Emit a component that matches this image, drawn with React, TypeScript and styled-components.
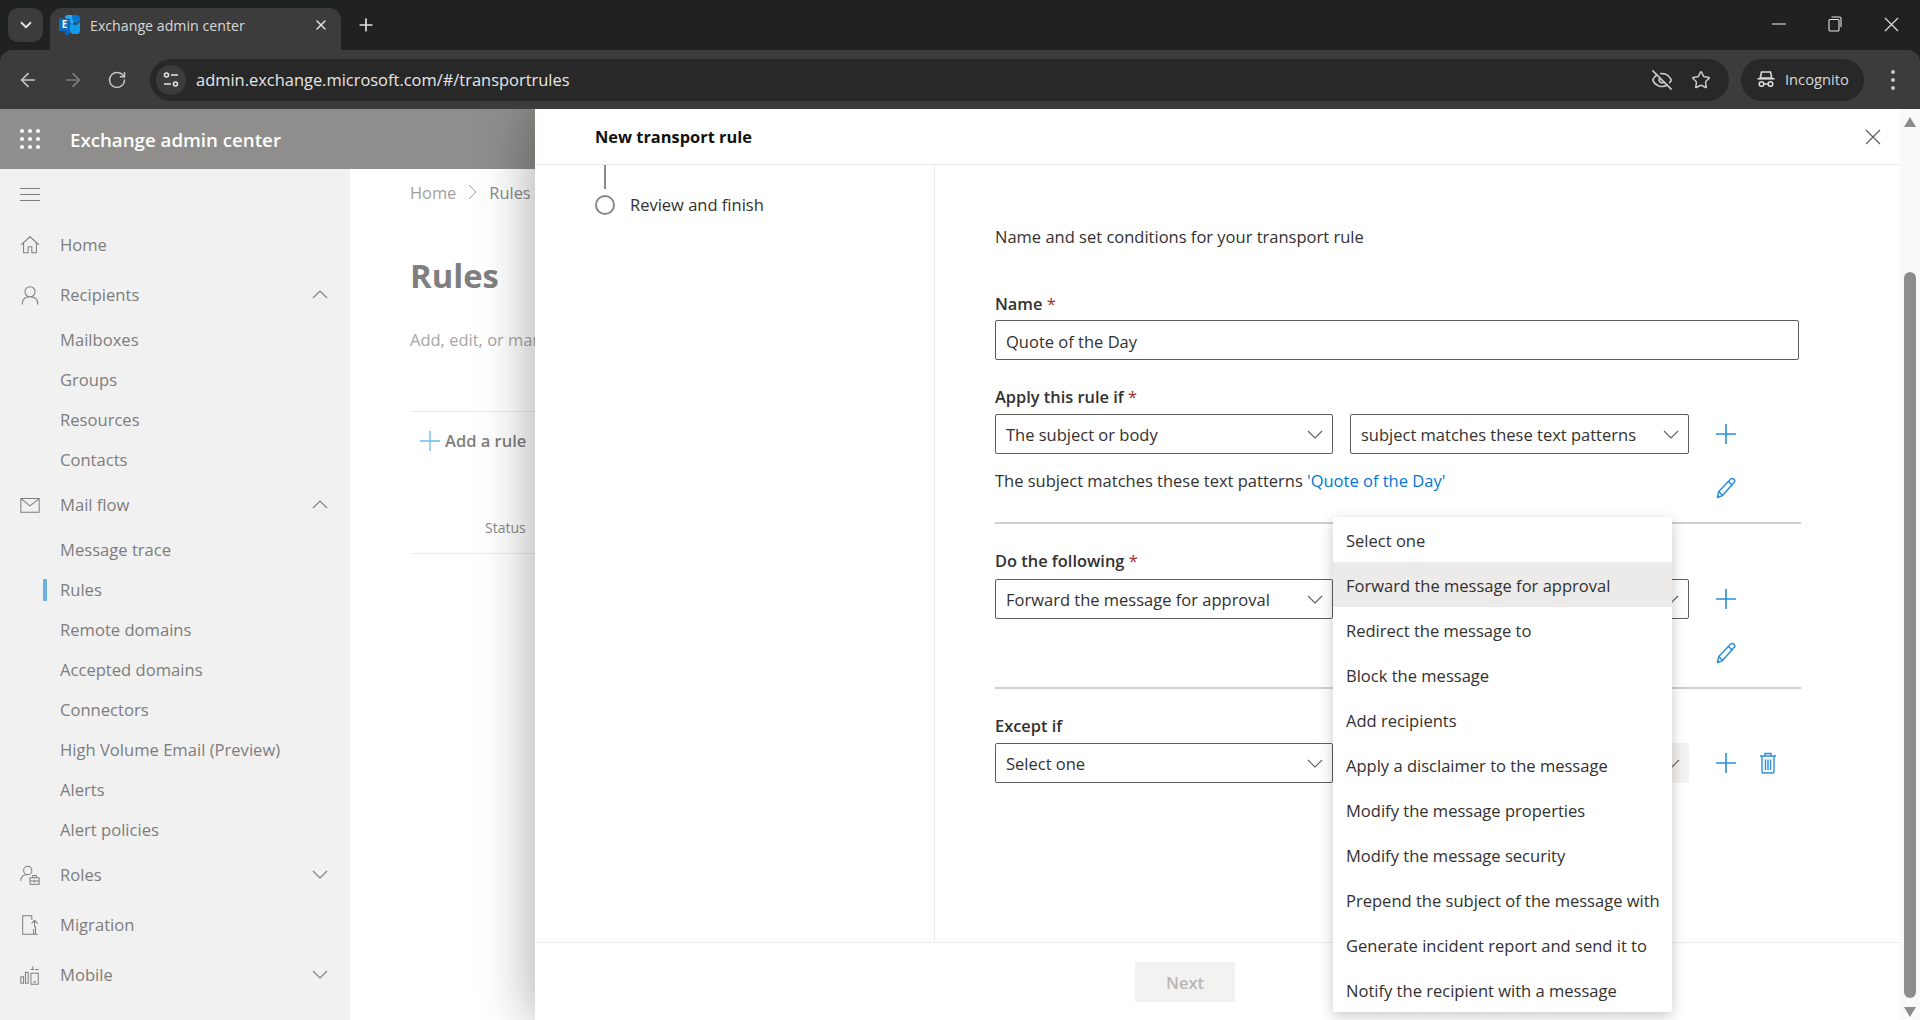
import React from "react";
import styled, { createGlobalStyle } from "styled-components";
import { ArrowLeft, ArrowRight, RotateCw, Star, EyeOff, X, Plus, ChevronDown } from "lucide-react";

const Global = createGlobalStyle`
  html, body { margin: 0; padding: 0; height: 100%; overflow: hidden; background: #fff; }
  body { font-family: "Open Sans", "Noto Sans", "Liberation Sans", sans-serif; }
  * { box-sizing: border-box; }
`;

const Shell = styled.div`display: flex; flex-direction: column; width: 1920px; height: 1020px; overflow: hidden;`;

/* browser chrome */
const TabStrip = styled.div`display: flex; align-items: flex-end; height: 50px; background: #202222; position: relative; flex: none;`;
const TabList = styled.button`
  width: 35px; height: 34px; margin: 0 7px 8px 8px; border: 0; padding: 0; border-radius: 10px; background: #3c3c3c; color: #e3e3e3;
  display: flex; align-items: center; justify-content: center;
`;
const Tab = styled.div`
  width: 291px; height: 42px; background: #3c3c3c; border-radius: 12px 12px 0 0; display: flex; align-items: center; padding: 0 12px 8px 9px; color: #e3e3e3;
`;
const TabTitle = styled.span`font-size: 14.2px; margin-left: 9px; flex: 1; white-space: nowrap; color: #d8d8d8;`;
const NewTab = styled.div`margin: 0 0 15px 15px; color: #e3e3e3; display: flex; width: 20px; height: 20px; align-self: flex-end;`;
const WindowControls = styled.div`margin-left: auto; display: flex; align-self: flex-start; height: 50px; align-items: center; padding: 0 21px 2px 0; gap: 42px; color: #e3e3e3;`;
const Toolbar = styled.div`height: 59px; background: #3c3c3c; border-radius: 12px 12px 0 0; display: flex; align-items: center; flex: none; position: relative;`;
const ToolbarBack = styled.div`background: #202222; flex: none;`;
const NavButtons = styled.div`display: flex; align-items: center; gap: 23px; padding-left: 17px; width: 150px; color: #c7c7c7;`;
const Omnibox = styled.div`width: 1579px; height: 42px; border-radius: 21px; background: #282828; display: flex; align-items: center; padding: 0 18px 0 6px; color: #e3e3e3;`;
const SiteInfo = styled.div`width: 30px; height: 30px; border-radius: 50%; background: #3c3c3c; display: flex; align-items: center; justify-content: center; margin-right: 10px;`;
const Url = styled.span`font-size: 16.45px; flex: 1; color: #e6e6e6; white-space: nowrap; padding-bottom: 1px;`;
const OmniIcons = styled.div`display: flex; align-items: center; gap: 18px; color: #c7c7c7; margin-top: 0;`;
const IncognitoPill = styled.div`width: 123px; height: 42px; border-radius: 21px; background: #282828; margin-left: 12px; display: flex; align-items: center; padding: 0 0 1px 15px; gap: 9px; color: #d8d8d8; font-size: 14.7px;`;
const MenuDots = styled.div`display: flex; flex-direction: column; gap: 4px; margin-left: 27px;`;
const Dot = styled.span`width: 4px; height: 4px; border-radius: 50%; background: #c7c7c7;`;

/* page */
const Page = styled.div`display: flex; height: 911px; flex: none;`;
const Viewport = styled.div`position: relative; width: 1900px; overflow: hidden; flex: none;`;
const AppHeader = styled.header`height: 60px; background: #8f8e8c; display: flex; align-items: center; padding-left: 20px; color: #fff;`;
const Waffle = styled.div`display: grid; grid-template-columns: repeat(3, 4px); gap: 4px; margin-right: 30px;`;
const WaffleDot = styled.span`width: 4px; height: 4px; background: #fff; border-radius: 50%;`;
const Brand = styled.span`font-size: 18.7px; font-weight: 600;`;
const Under = styled.div`display: flex; height: 851px;`;
const Side = styled.nav`width: 350px; background: #f1f1f1; flex: none; color: #7d7d7d; overflow: hidden;`;
const Burger = styled.div`height: 51px; padding: 19px 0 0 20px; display: flex; flex-direction: column; gap: 5px;`;
const BurgerLine = styled.span`width: 20px; height: 1px; background: #7d7d7d;`;
const ParentRow = styled.div`height: 50px; display: flex; align-items: center; padding: 0 22px 1px 19px; font-size: 16.6px;`;
const NavIcon = styled.span`width: 22px; height: 24px; margin-right: 19px; display: flex; align-items: center;`;
const NavLabel = styled.span`flex: 1;`;
const SubRow = styled.div<{ $active?: boolean }>`
  height: 40px; display: flex; align-items: center; padding: 0 0 1px 60px; font-size: 16.6px; position: relative;
  ${(p) => p.$active && `&::before { content: ""; position: absolute; left: 43px; top: 9px; width: 4px; height: 22px; background: #6cb0e6; }`}
`;
const Main = styled.main`flex: 1; padding: 0 0 0 60px; color: #8a8a8a; min-width: 0; overflow: hidden;`;
const Crumbs = styled.div`display: flex; align-items: center; height: 46px; font-size: 16.4px; color: #a0a0a0; gap: 12px; white-space: nowrap;`;
const CrumbCurrent = styled.span`color: #8a8a8a;`;
const RulesTitle = styled.h1`font-size: 32.8px; font-weight: 700; margin: 37px 0 0; line-height: 48px; color: #7f7f7f;`;
const RulesDesc = styled.p`font-size: 16.5px; margin: 28px 0 0; color: #a6a6a6; line-height: 24px; white-space: nowrap;`;
const CommandBar = styled.div`margin-top: 59px; border-top: 1px solid #ececec; height: 58px; display: flex; align-items: center; padding-left: 10px; gap: 5px; font-size: 16.5px; font-weight: 600; color: #7f7f7f; white-space: nowrap;`;
const TableHead = styled.div`height: 85px; border-bottom: 1px solid #ececec; padding: 47px 0 0 75px; font-size: 14px; color: #8a8a8a; line-height: 24px;`;

/* panel */
const Panel = styled.section`
  position: absolute; top: 0; left: 535px; right: 0; bottom: 0; background: #fff; display: flex; flex-direction: column;
  box-shadow: -4px 0 50px rgba(0, 0, 0, 0.32); color: #323130;
`;
const PanelHead = styled.div`height: 56px; border-bottom: 1px solid #edebe9; display: flex; align-items: center; justify-content: space-between; padding: 0 19px 0 60px; flex: none;`;
const PanelTitle = styled.h2`font-size: 16.4px; font-weight: 700; margin: 0; color: #111;`;
const CloseBtn = styled.span`display: flex; color: #444;`;
const PanelBody = styled.div`flex: 1; display: flex; min-height: 0;`;
const StepCol = styled.div`width: 400px; flex: none; border-right: 1px solid #edebe9; padding-left: 60px;`;
const StepLine = styled.div`width: 2px; height: 24px; background: #8a8886; margin: 0 0 6px 9px;`;
const StepRow = styled.div`display: flex; align-items: center; gap: 15px; font-size: 16.5px; line-height: 18px;`;
const StepCircle = styled.span`width: 20px; height: 20px; border-radius: 50%; border: 2.5px solid #8a8886; background: #fff; flex: none;`;
const FormCol = styled.div`flex: 1; padding: 60px 0 0 60px;`;
const Lead = styled.p`font-size: 16.5px; line-height: 24px; margin: 0 0 43px;`;
const FieldLabel = styled.label<{ $gap?: number }>`display: block; font-size: 16.4px; font-weight: 600; line-height: 24px; margin-bottom: ${(p) => p.$gap ?? 5}px;`;
const Req = styled.span`color: #a4262c; font-weight: 400;`;
const NameInput = styled.div`width: 804px; height: 40px; border: 1px solid #605e5c; border-radius: 2px; display: flex; align-items: center; padding: 2px 0 0 10px; font-size: 16.5px; margin-bottom: 25px; margin-top: -1px;`;
const FieldRow = styled.div`display: flex; align-items: center; height: 40px;`;
const Select = styled.div<{ $w: number; $off?: boolean }>`
  width: ${(p) => p.$w}px; height: 40px; border: ${(p) => (p.$off ? "0" : "1px solid #605e5c")}; border-radius: 2px; background: ${(p) => (p.$off ? "#f3f2f1" : "#fff")};
  display: flex; align-items: center; justify-content: space-between; padding: 0 9px 0 10px; font-size: 16.5px; flex: none; white-space: nowrap;
`;
const SelectGap = styled.span`width: 17px; flex: none;`;
const RowIcons = styled.div`display: flex; gap: 20px; margin-left: 26px; color: #2b8ddb;`;
const IconSlot = styled.span`width: 22px; height: 24px; display: flex; align-items: center; justify-content: center;`;
const Summary = styled.div`height: 68px; display: flex; font-size: 16.5px;`;
const SummaryText = styled.div`width: 720px; padding-top: 15px; line-height: 24px;`;
const SummaryIcon = styled.div`padding-top: 22px; color: #2b8ddb;`;
const Link = styled.span`color: #0078d4;`;
const Rule = styled.hr`width: 806px; height: 2px; border: 0; background: #cfcfcf; margin: 0 0 25px;`;
const PanelFoot = styled.div`height: 78px; flex: none; border-top: 1px solid #edebe9; padding: 19px 0 0 600px;`;
const NextBtn = styled.div`width: 100px; height: 40px; background: #f3f2f1; color: #b8b6b4; font-size: 16.5px; font-weight: 600; display: flex; align-items: center; justify-content: center;`;
const Menu = styled.ul`
  position: absolute; left: 798px; top: 408px; width: 339px; margin: 0; padding: 0; list-style: none; background: #fff; box-shadow: 0 4px 14px rgba(0, 0, 0, 0.22); border-radius: 2px; z-index: 2;
`;
const MenuItem = styled.li<{ $hot?: boolean }>`height: 45px; display: flex; align-items: center; padding: 1px 0 0 13px; font-size: 16.55px; white-space: nowrap; background: ${(p) => (p.$hot ? "#edebe9" : "transparent")};`;

/* scrollbar */
const Scroll = styled.div`width: 20px; flex: none; background: #fafafa; position: relative; display: flex; flex-direction: column; align-items: center; padding-top: 8px;`;
const ArrowUp = styled.span`width: 0; height: 0; border-left: 6px solid transparent; border-right: 6px solid transparent; border-bottom: 10px solid #8c8c8c;`;
const ArrowDown = styled.span`width: 0; height: 0; border-left: 6px solid transparent; border-right: 6px solid transparent; border-top: 10px solid #8c8c8c; margin-top: 9px;`;
const Thumb = styled.span`width: 12px; height: 726px; margin-top: 145px; background: #8c8c8c; border-radius: 6px;`;

const Thin = ({ d, size = 20, sw = 1.1, vb = 24 }: { d: string; size?: number; sw?: number; vb?: number }) => (
  <svg width={size} height={size} viewBox={`0 0 ${vb} ${vb}`} fill="none" stroke="currentColor" strokeWidth={sw} strokeLinecap="round" strokeLinejoin="round"><path d={d} /></svg>
);

const Chev = ({ up, color = "#7d7d7d" }: { up?: boolean; color?: string }) => (
  <svg width="16" height="9" viewBox="0 0 16 9" fill="none" stroke={color} strokeWidth="1.1"><path d={up ? "M1 8l7-7 7 7" : "M1 1l7 7 7-7"} /></svg>
);

const SelChev = () => <svg width="16" height="9" viewBox="0 0 16 9" fill="none" stroke="#605e5c" strokeWidth="1.1"><path d="M1 1l7 7 7-7" /></svg>;

const PlusThin = () => <svg width="22" height="22" viewBox="0 0 22 22" stroke="#2b8ddb" strokeWidth="1.6"><path d="M11 1v20M1 11h20" /></svg>;
const Pencil = () => (
  <svg width="22" height="24" viewBox="0 0 22 24" fill="none" stroke="#2b8ddb" strokeWidth="1.5" strokeLinejoin="round"><path d="M2.5 21.5l1.3-6L15.5 3.2c1-1 2.6-1 3.5 0s.9 2.3 0 3.3L7.5 19.6z" /><path d="M13.5 5.5l4 4M3.8 15.5l3.7 4" /></svg>
);
const Trash = () => (
  <svg width="18" height="22" viewBox="0 0 18 22" fill="none" stroke="#2b8ddb" strokeWidth="1.4"><path d="M1 4h16M6 4V1.5h6V4M3 4v15.5c0 1 .6 1.5 1.5 1.5h9c.9 0 1.5-.5 1.5-1.5V4" /><path d="M6.5 7.5V18M9 7.5V18M11.5 7.5V18" /></svg>
);

const ExchangeLogo = () => (
  <svg width="22" height="20" viewBox="0 0 22 20">
    <path d="M6 2.5C6 1.2 7 0 8.5 0H13l3.5 5-3.5 5-3.500-5z" fill="#28a8ea" />
    <path d="M13 0h5c1.800 0 3 1.200 3 3v3l-4 3-3.500-4z" fill="#0078d4" />
    <path d="M8 10l5-1 4 1 4-3v9c0 2-1.500 3-3 3h-5l-3.500-4z" fill="#0f9be8" />
    <path d="M6 14h5v3c0 1.500-.8 3-2.500 3H6z" fill="#0364b8" />
    <rect x="0" y="3.500" width="11" height="12.500" rx="1.200" fill="#0f6cbd" />
    <text x="5.500" y="13.300" textAnchor="middle" fontSize="10" fontWeight="700" fill="#fff" fontFamily="Open Sans">E</text>
  </svg>
);

const Tune = () => (
  <svg width="18" height="18" viewBox="0 0 18 18" fill="none" stroke="#e3e3e3" strokeWidth="1.6"><circle cx="4.500" cy="4" r="2" /><path d="M9 4h7M2 13h7" /><circle cx="13.500" cy="13" r="2" /></svg>
);
const Hat = () => (
  <svg width="20" height="20" viewBox="0 0 20 20" fill="none" stroke="#d8d8d8" strokeWidth="1.6"><path d="M5.500 3h9l1.300 6H4.200z" fill="#282828" /><path d="M1.500 9.800h17" /><circle cx="5.500" cy="15" r="2.300" /><circle cx="14.500" cy="15" r="2.300" /><path d="M7.800 15h4.400" /></svg>
);
const Restore = () => (
  <svg width="14" height="16" viewBox="0 0 14 16" fill="none" stroke="#e3e3e3" strokeWidth="1.100"><rect x="1" y="3.500" width="10" height="11.500" rx="1" /><path d="M3.500 1h8c1 0 1.500.5 1.500 1.500V11" /></svg>
);

const icons = {
  home: "M2.500 11.500L12 3l9.500 8.500M5 10v10.500h5V14h4v6.500h5V10",
  person: "M12 3a5.500 5.500 0 100 11 5.500 5.500 0 000-11zM3.500 22c0-5 3-8 8.500-8s8.500 3 8.500 8",
  mail: "M2 5h20v15H2zM2 5l10 8 10-8",
  roles: "M9.500 2.500a4.500 4.500 0 100 9 4.500 4.500 0 000-9zM2 18c.2-4 3-6.500 7.500-6.500M12 15h10v7H12zM15 15v-2.500h4V15M12 18.500h10M17 17.500v2",
  migration: "M4 2h10v4M18 14v8H4V2M14 10l3-3 3 3M17 7v7M16 17v5h4",
  mobile: "M2 14h3v7H2zM7 9h3v12H7zM13 10h8v12h-8zM16 19.500h2M13 6h3M18 6h3M15 3v3",
};

const Nav = () => {
  const recips = ["Mailboxes", "Groups", "Resources", "Contacts"];
  const flows = ["Message trace", "Rules", "Remote domains", "Accepted domains", "Connectors", "High Volume Email (Preview)", "Alerts", "Alert policies"];
  return (
    <Side>
      <Burger><BurgerLine /><BurgerLine /><BurgerLine /></Burger>
      <ParentRow><NavIcon><Thin d={icons.home} size={22} /></NavIcon><NavLabel>Home</NavLabel></ParentRow>
      <ParentRow><NavIcon><Thin d={icons.person} size={22} /></NavIcon><NavLabel>Recipients</NavLabel><Chev up /></ParentRow>
      {recips.map((r) => <SubRow key={r}>{r}</SubRow>)}
      <ParentRow><NavIcon><Thin d={icons.mail} size={22} /></NavIcon><NavLabel>Mail flow</NavLabel><Chev up /></ParentRow>
      {flows.map((r) => <SubRow key={r} $active={r === "Rules"}>{r}</SubRow>)}
      <ParentRow><NavIcon><Thin d={icons.roles} size={22} /></NavIcon><NavLabel>Roles</NavLabel><Chev /></ParentRow>
      <ParentRow><NavIcon><Thin d={icons.migration} size={22} /></NavIcon><NavLabel>Migration</NavLabel></ParentRow>
      <ParentRow><NavIcon><Thin d={icons.mobile} size={22} /></NavIcon><NavLabel>Mobile</NavLabel><Chev /></ParentRow>
      <ParentRow><NavIcon><Thin d="M3 15v9" size={22} /></NavIcon></ParentRow>
    </Side>
  );
};

const options = ["Select one", "Forward the message for approval", "Redirect the message to", "Block the message", "Add recipients", "Apply a disclaimer to the message", "Modify the message properties", "Modify the message security", "Prepend the subject of the message with", "Generate incident report and send it to", "Notify the recipient with a message"];

export default function App() {
  return (
    <Shell>
      <Global />
      <TabStrip>
        <TabList><ChevronDown size={18} strokeWidth={2.4} /></TabList>
        <Tab>
          <ExchangeLogo />
          <TabTitle>Exchange admin center</TabTitle>
          <X size={16} strokeWidth={2.2} />
        </Tab>
        <NewTab><Plus size={20} strokeWidth={2} /></NewTab>
        <WindowControls>
          <svg width="14" height="14" viewBox="0 0 14 14" stroke="#e3e3e3" strokeWidth="1.100"><path d="M0 7h14" /></svg>
          <Restore />
          <svg width="15" height="15" viewBox="0 0 15 15" stroke="#e3e3e3" strokeWidth="1.100"><path d="M1 1l13 13M14 1L1 14" /></svg>
        </WindowControls>
      </TabStrip>
      <ToolbarBack>
        <Toolbar>
          <NavButtons>
            <ArrowLeft size={22} strokeWidth={1.8} />
            <ArrowRight size={22} strokeWidth={1.8} color="#7e7e7e" />
            <RotateCw size={20} strokeWidth={1.8} />
          </NavButtons>
          <Omnibox>
            <SiteInfo><Tune /></SiteInfo>
            <Url>admin.exchange.microsoft.com/#/transportrules</Url>
            <OmniIcons>
              <EyeOff size={22} strokeWidth={1.8} />
              <Star size={20} strokeWidth={1.8} />
            </OmniIcons>
          </Omnibox>
          <IncognitoPill><Hat />Incognito</IncognitoPill>
          <MenuDots><Dot /><Dot /><Dot /></MenuDots>
        </Toolbar>
      </ToolbarBack>
      <Page>
        <Viewport>
          <AppHeader>
            <Waffle>{Array.from({ length: 9 }).map((_, i) => <WaffleDot key={i} />)}</Waffle>
            <Brand>Exchange admin center</Brand>
          </AppHeader>
          <Under>
            <Nav />
            <Main>
              <Crumbs>Home<svg width="9" height="16" viewBox="0 0 9 16" fill="none" stroke="#a0a0a0" strokeWidth="1"><path d="M1 1l7 7-7 7" /></svg><CrumbCurrent>Rules</CrumbCurrent></Crumbs>
              <RulesTitle>Rules</RulesTitle>
              <RulesDesc>Add, edit, or manage mail flow rules</RulesDesc>
              <CommandBar><svg width="20" height="20" viewBox="0 0 20 20" stroke="#6cb9ee" strokeWidth="1.300"><path d="M10 0v20M0 10h20" /></svg>Add a rule</CommandBar>
              <TableHead>Status</TableHead>
            </Main>
          </Under>
          <Panel>
            <PanelHead>
              <PanelTitle>New transport rule</PanelTitle>
              <CloseBtn><svg width="16" height="16" viewBox="0 0 16 16" stroke="#555" strokeWidth="1.100"><path d="M1 1l14 14M15 1L1 15" /></svg></CloseBtn>
            </PanelHead>
            <PanelBody>
              <StepCol>
                <StepLine />
                <StepRow><StepCircle />Review and finish</StepRow>
              </StepCol>
              <FormCol>
                <Lead>Name and set conditions for your transport rule</Lead>
                <FieldLabel>Name <Req>*</Req></FieldLabel>
                <NameInput>Quote of the Day</NameInput>
                <FieldLabel>Apply this rule if <Req>*</Req></FieldLabel>
                <FieldRow>
                  <Select $w={338}>The subject or body<SelChev /></Select>
                  <SelectGap />
                  <Select $w={339}>subject matches these text patterns<SelChev /></Select>
                  <RowIcons><IconSlot><PlusThin /></IconSlot></RowIcons>
                </FieldRow>
                <Summary>
                  <SummaryText>The subject matches these text patterns <Link>'Quote of the Day'</Link></SummaryText>
                  <SummaryIcon><Pencil /></SummaryIcon>
                </Summary>
                <Rule />
                <FieldLabel $gap={6}>Do the following <Req>*</Req></FieldLabel>
                <FieldRow>
                  <Select $w={338}>Forward the message for approval<SelChev /></Select>
                  <SelectGap />
                  <Select $w={339}>&nbsp;<SelChev /></Select>
                  <RowIcons><IconSlot><PlusThin /></IconSlot></RowIcons>
                </FieldRow>
                <Summary>
                  <SummaryText />
                  <SummaryIcon><Pencil /></SummaryIcon>
                </Summary>
                <Rule />
                <FieldLabel>Except if</FieldLabel>
                <FieldRow>
                  <Select $w={338}>Select one<SelChev /></Select>
                  <SelectGap />
                  <Select $w={339} $off>&nbsp;<SelChev /></Select>
                  <RowIcons>
                    <IconSlot><PlusThin /></IconSlot>
                    <IconSlot><Trash /></IconSlot>
                  </RowIcons>
                </FieldRow>
              </FormCol>
            </PanelBody>
            <PanelFoot><NextBtn>Next</NextBtn></PanelFoot>
            <Menu>
              {options.map((o, i) => <MenuItem key={o} $hot={i === 1}>{o}</MenuItem>)}
            </Menu>
          </Panel>
        </Viewport>
        <Scroll>
          <ArrowUp />
          <Thumb />
          <ArrowDown />
        </Scroll>
      </Page>
    </Shell>
  );
}
